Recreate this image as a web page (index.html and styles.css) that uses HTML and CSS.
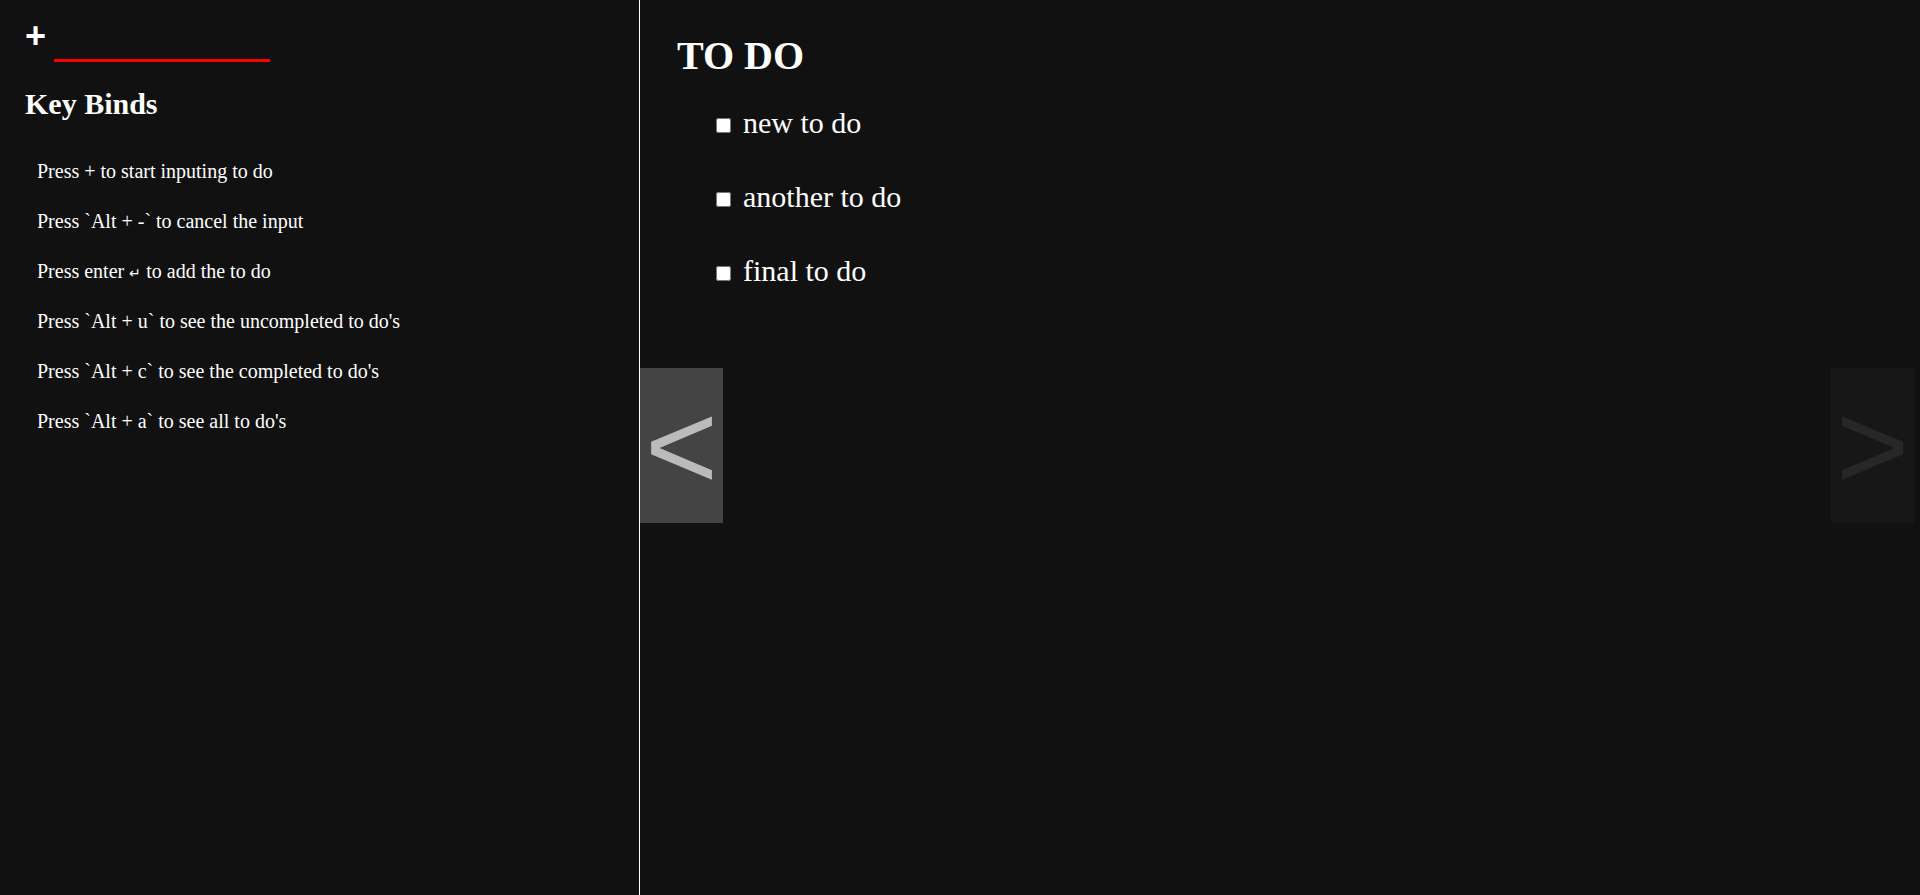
FILE: index.html
```html
<!DOCTYPE html>
<html lang="en">
<head>
<meta charset="utf-8">
<title>To Do</title>
<link rel="stylesheet" href="styles.css">
</head>
<body>
<div class="app">
  <aside class="sidebar">
    <div class="add-row">
      <label class="add-label" for="todo-input">+</label>
      <input id="todo-input" class="add-input" type="text">
    </div>
    <h2 class="keys-title">Key Binds</h2>
    <ul class="keys">
      <li>Press + to start inputing to do</li>
      <li>Press `Alt + -` to cancel the input</li>
      <li>Press enter <span class="key-glyph">↵</span> to add the to do</li>
      <li>Press `Alt + u` to see the uncompleted to do's</li>
      <li>Press `Alt + c` to see the completed to do's</li>
      <li>Press `Alt + a` to see all to do's</li>
    </ul>
  </aside>
  <main class="board">
    <h1 class="board-title">TO DO</h1>
    <ul class="todos">
      <li class="todo"><input type="checkbox" class="todo-check"><span>new to do</span></li>
      <li class="todo"><input type="checkbox" class="todo-check"><span>another to do</span></li>
      <li class="todo"><input type="checkbox" class="todo-check"><span>final to do</span></li>
    </ul>
    <button class="nav nav-prev" type="button">&lt;</button>
    <button class="nav nav-next" type="button">&gt;</button>
  </main>
</div>
</body>
</html>
```
FILE: styles.css
```css
html, body {
  margin: 0;
  height: 100%;
  background: #111111;
  color: #ffffff;
  font-family: "Liberation Serif", "Times New Roman", serif;
}

.app {
  display: flex;
  height: 100vh;
  overflow: hidden;
}

.sidebar {
  width: 640px;
  flex: none;
  box-sizing: border-box;
  border-right: 1px solid #ffffff;
  padding: 0 25px;
}

.add-row {
  display: flex;
  align-items: flex-start;
  height: 62px;
}

.add-label {
  font: bold 36px/36px "Liberation Sans", Arial, sans-serif;
  margin-top: 18px;
  color: #ffffff;
}

.add-input {
  margin: 32px 0 0 8px;
  width: 216px;
  height: 30px;
  box-sizing: border-box;
  padding: 0;
  border: none;
  border-bottom: 3px solid #ff0000;
  background: transparent;
  color: #ffffff;
  outline: none;
  font: 20px "Liberation Serif", serif;
}

.keys-title {
  margin: 25px 0 0;
  font-size: 30px;
  line-height: 34px;
  font-weight: bold;
}

.keys {
  margin: 25px 0 0;
  padding: 0 0 0 12px;
  list-style: none;
}

.keys li {
  font-size: 20px;
  line-height: 50px;
}

.key-glyph {
  font-size: 14px;
  line-height: 0;
}

.board {
  flex: 1;
  position: relative;
  padding: 33px 0 0 37px;
}

.board-title {
  margin: 0;
  font-size: 40px;
  line-height: 46px;
  font-weight: bold;
}

.todos {
  margin: 7px 0 0;
  padding: 0 0 0 39px;
  list-style: none;
}

.todo {
  font-size: 30px;
  line-height: 74px;
}

.todo-check {
  width: 15px;
  height: 15px;
  margin: 0 12px 0 0;
  vertical-align: baseline;
}

.nav {
  position: absolute;
  top: 368px;
  width: 83px;
  height: 155px;
  padding: 0;
  border: none;
  background: #444444;
  color: #bbbbbb;
  font: 125px/152px "Liberation Sans", Arial, sans-serif;
  text-align: center;
  cursor: pointer;
}

.nav-prev {
  left: 0;
}

.nav-next {
  right: 6px;
  opacity: 0.13;
}
```
